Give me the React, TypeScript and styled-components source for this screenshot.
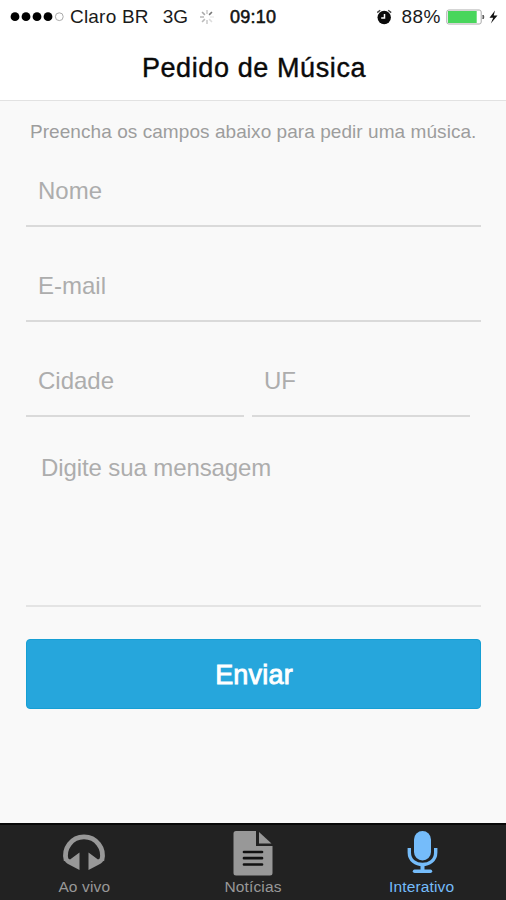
import React from 'react';
import styled, { createGlobalStyle } from 'styled-components';

const GlobalStyle = createGlobalStyle`
  * { box-sizing: border-box; }
  body { margin: 0; }
  body, input, textarea, button {
    font-family: "Liberation Sans", Arial, Helvetica, sans-serif;
  }
`;

const Screen = styled.div`
  display: flex;
  flex-direction: column;
  width: 506px;
  height: 900px;
  overflow: hidden;
  background: #f9f9f9;
`;

const Header = styled.header`
  height: 101px;
  background: #fff;
  border-bottom: 1px solid #e2e2e2;
`;

const StatusBar = styled.div`
  display: flex;
  align-items: center;
  justify-content: space-between;
  height: 34px;
  padding: 0 7px 0 10px;
  line-height: 34px;
  color: #1a1a1a;
  white-space: nowrap;
  svg { display: block; flex: none; }
`;

const StatusGroup = styled.div`
  display: flex;
  align-items: center;
`;

const StatusText = styled.span<{ $gap: number; $spacing?: number; $strong?: boolean }>`
  margin-left: ${p => p.$gap}px;
  font-size: ${p => (p.$strong ? 18 : 19)}px;
  letter-spacing: ${p => p.$spacing ?? 0}px;
  -webkit-text-stroke: ${p => (p.$strong ? '0.5px #000' : '0')};
`;

const Spinner = styled.svg`
  margin-left: 11px;
`;

const Battery = styled.svg`
  margin-left: 5px;
`;

const Title = styled.h1`
  margin: 0;
  padding: 1px 0 0 2px;
  font-size: 27px;
  font-weight: 400;
  line-height: 66px;
  letter-spacing: 0.6px;
  text-align: center;
  color: #0a0a0a;
  -webkit-text-stroke: 0.4px #0a0a0a;
`;

const Form = styled.form`
  flex: 1;
  display: flex;
  flex-direction: column;
  padding: 0 25px 0 26px;
`;

const Hint = styled.p`
  margin: 0;
  padding-top: 18px;
  height: 54px;
  font-size: 19px;
  line-height: 26px;
  letter-spacing: 0.06px;
  text-indent: 4px;
  white-space: nowrap;
  color: #9d9d9d;
`;

const Field = styled.input`
  width: 100%;
  height: 72px;
  min-width: 0;
  margin: 0 0 23px;
  padding: 2px 12px 0;
  border: 0;
  border-bottom: 2px solid #dadada;
  border-radius: 0;
  outline: 0;
  background: transparent;
  font-size: 24px;
  color: #555;
  &::placeholder { color: #adadad; opacity: 1; }
`;

const FieldPair = styled.div`
  display: grid;
  grid-template-columns: 218px 218px;
  column-gap: 8px;
`;

const Message = styled.textarea`
  display: block;
  width: 100%;
  height: 167px;
  padding: 14px 15px;
  border: 0;
  border-bottom: 2px solid #e4e4e4;
  outline: 0;
  resize: none;
  background: transparent;
  font-size: 24px;
  letter-spacing: -0.1px;
  line-height: 28px;
  color: #555;
  &::placeholder { color: #adadad; opacity: 1; }
`;

const Submit = styled.button`
  height: 70px;
  margin: 32px 0 0;
  padding: 2px 0 0 1px;
  border: 1px solid #169fd4;
  border-radius: 4px;
  background: #26a6dc;
  color: #fff;
  font-size: 27px;
  letter-spacing: 0.2px;
  -webkit-text-stroke: 0.9px #fff;
`;

const TabBar = styled.nav`
  display: grid;
  grid-template-columns: repeat(3, 1fr);
  height: 77px;
  background: #222;
  border-top: 2px solid #090909;
`;

const Tab = styled.a<{ $active?: boolean }>`
  display: flex;
  flex-direction: column;
  align-items: center;
  color: ${p => (p.$active ? '#75bcfa' : '#989898')};
  font-size: 15.5px;
  line-height: 18px;
  letter-spacing: 0.15px;
  svg { display: block; margin: 5px 0 2px; }
`;

const rays = [
  { angle: 0, color: '#ccc' },
  { angle: 45, color: '#777' },
  { angle: 90, color: '#eee' },
  { angle: 135, color: '#ddd' },
  { angle: 180, color: '#ccc' },
  { angle: 225, color: '#bbb' },
  { angle: 270, color: '#bbb' },
  { angle: 315, color: '#aaa' },
];

function SignalDots() {
  return (
    <svg width="54" height="12" viewBox="0 0 54 12">
      {[5, 16, 27, 38].map(x => <circle key={x} cx={x} cy="5.7" r="4.4" fill="#000" />)}
      <circle cx="49.3" cy="5.7" r="3.9" fill="none" stroke="#aaa" />
    </svg>
  );
}

export default function App() {
  return (
    <>
      <GlobalStyle />
      <Screen>
        <Header>
          <StatusBar>
            <StatusGroup>
              <SignalDots />
              <StatusText $gap={6} $spacing={0.2}>Claro BR</StatusText>
              <StatusText $gap={14}>3G</StatusText>
              <Spinner width="16" height="16" viewBox="0 0 16 16">
                {rays.map(({ angle, color }) => (
                  <line key={angle} x1="8" y1="1" x2="8" y2="5" stroke={color} strokeWidth="1.6" transform={`rotate(${angle} 8 8)`} />
                ))}
              </Spinner>
              <StatusText $gap={15} $spacing={0.25} $strong>09:10</StatusText>
            </StatusGroup>
            <StatusGroup>
              <svg width="16" height="16" viewBox="0 0 16 16">
                <circle cx="7.2" cy="8.5" r="6.7" fill="#0a0a0a" />
                <path d="M0.2 3.6 3.2 1.2M11.2 1.2l3 2.4" stroke="#444" strokeWidth="1.4" />
                <path d="M7.5 5v4H4.2" fill="none" stroke="#fff" strokeWidth="1.5" />
              </svg>
              <StatusText $gap={8} $spacing={0.5}>88%</StatusText>
              <Battery width="53" height="18" viewBox="0 0 53 18">
                <rect x="0.8" y="2" width="34.4" height="14" rx="2" fill="#fff" stroke="#aaa" />
                <rect x="2" y="3" width="28.7" height="12" fill="#48d65c" />
                <path d="M37 7v4q1.8-2 0-4z" fill="#555" stroke="#555" />
                <path d="M49 2.5 43.5 9.8h3.7L44.8 15.5 51.5 7.6h-3.8z" fill="#111" />
              </Battery>
            </StatusGroup>
          </StatusBar>
          <Title>Pedido de Música</Title>
        </Header>
        <Form onSubmit={e => e.preventDefault()}>
          <Hint>Preencha os campos abaixo para pedir uma música.</Hint>
          <Field placeholder="Nome" />
          <Field placeholder="E-mail" />
          <FieldPair>
            <Field placeholder="Cidade" />
            <Field placeholder="UF" />
          </FieldPair>
          <Message placeholder="Digite sua mensagem" />
          <Submit type="submit">Enviar</Submit>
        </Form>
        <TabBar>
          <Tab>
            <svg width="46" height="46" viewBox="0 0 46 46">
              <path d="M5.2 30.500A18.500 18.500 0 1 1 40.800 30.500" fill="none" stroke="currentColor" strokeWidth="4.800" />
              <path d="M3 29 7 28.500 9 29.500 18.500 22.500V40L8 34.500Q4 32.500 3 29zM43 29 39 28.500 37 29.500 27.500 22.500V40L38 34.500Q42 32.500 43 29z" fill="currentColor" />
            </svg>
            Ao vivo
          </Tab>
          <Tab>
            <svg width="46" height="46" viewBox="0 0 46 46">
              <path d="M6 1h20v15h16.500v27q0 2.500-2.500 2.500h-34Q3.500 45.500 3.500 43V3.500Q3.500 1 6 1z" fill="currentColor" />
              <path d="M29 2v11.500h12.500z" fill="currentColor" />
              <path d="M14 22h18M14 28.200h18M14 34.500h18" stroke="#111" strokeWidth="2.700" strokeLinecap="round" />
            </svg>
            Notícias
          </Tab>
          <Tab $active>
            <svg width="46" height="46" viewBox="0 0 46 46">
              <rect x="15" y="1" width="17" height="29.500" rx="8.500" fill="currentColor" />
              <path d="M10.300 18v4.500c0 16 26.400 16 26.400 0V18" fill="none" stroke="currentColor" strokeWidth="3.400" />
              <path d="M23.500 34v7" stroke="currentColor" strokeWidth="4" />
              <path d="M15.500 41.200h16" stroke="currentColor" strokeWidth="3.400" strokeLinecap="round" />
            </svg>
            Interativo
          </Tab>
        </TabBar>
      </Screen>
    </>
  );
}
